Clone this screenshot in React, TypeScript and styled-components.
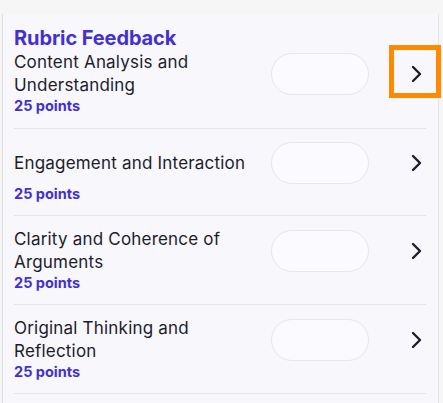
import React from "react";
import styled, { createGlobalStyle } from "styled-components";

type Criterion = {
  id: string;
  label: string;
  points: number;
};

const criteria: Criterion[] = [
  { id: "content", label: "Content Analysis and Understanding", points: 25 },
  { id: "engagement", label: "Engagement and Interaction", points: 25 },
  { id: "clarity", label: "Clarity and Coherence of Arguments", points: 25 },
  { id: "original", label: "Original Thinking and Reflection", points: 25 },
];

const GlobalStyle = createGlobalStyle`
  html, body {
    margin: 0;
    padding: 0;
    background: #f6f6f7;
    font-family: Inter, "Noto Sans", "Liberation Sans", sans-serif;
  }
  * {
    box-sizing: border-box;
  }
`;

const Page = styled.div`
  padding: 14px 4px 0 2px;
  height: 403px;
  overflow: hidden;
`;

const Panel = styled.section`
  background: #f7f7fc;
  border-left: 1px solid #dddde2;
  border-right: 1px solid #e3e3e8;
  padding: 12px 12px 0 11px;
  min-height: 400px;
`;

const Heading = styled.h2`
  margin: 0;
  font-size: 20px;
  line-height: 25px;
  font-weight: 700;
  letter-spacing: -0.1px;
  color: #4331cf;
`;

const Row = styled.div<{ first?: boolean }>`
  padding: ${({ first }) => (first ? "0 0 13px" : "12px 0 12px")};
  border-bottom: 1px solid #e4e4e9;
`;

const RowMain = styled.div`
  display: flex;
  align-items: center;
  min-height: 44px;
`;

const Label = styled.div`
  flex: 1;
  padding-right: 16px;
  font-size: 17px;
  line-height: 23px;
  letter-spacing: 0.2px;
  color: #1d1c2b;
`;

const ScoreInput = styled.input`
  width: 98px;
  height: 42px;
  border: 1px solid #e6e6ec;
  border-radius: 21px;
  background: #fafaff;
  outline: none;
  flex-shrink: 0;
`;

const ChevronButton = styled.button<{ focused?: boolean }>`
  position: relative;
  width: 42px;
  height: 44px;
  margin: 0 -10px 0 25px;
  padding: 0 0 0 2px;
  border: none;
  background: transparent;
  display: flex;
  align-items: center;
  justify-content: center;
  color: #1d1c2b;
  flex-shrink: 0;

  &::after {
    content: "";
    display: ${({ focused }) => (focused ? "block" : "none")};
    position: absolute;
    top: -7px;
    bottom: -2px;
    left: -5px;
    right: -5px;
    border: 5px solid #ff8a00;
    pointer-events: none;
  }
`;

const Points = styled.div`
  font-size: 14.5px;
  line-height: 18px;
  font-weight: 700;
  color: #4331cf;
`;

const Chevron = () => (
  <svg width="24" height="24" viewBox="0 0 24 24" fill="none">
    <path
      d="M9 5l7 7-7 7"
      stroke="currentColor"
      strokeWidth="2.4"
      strokeLinecap="round"
      strokeLinejoin="round"
    />
  </svg>
);

const App = () => {
  return (
    <Page>
      <GlobalStyle />
      <Panel>
        <Heading>Rubric Feedback</Heading>
        {criteria.map((c, i) => (
          <Row key={c.id} first={i === 0}>
            <RowMain>
              <Label>{c.label}</Label>
              <ScoreInput aria-label={`${c.label} score`} />
              <ChevronButton focused={i === 0} aria-label="Open criterion">
                <Chevron />
              </ChevronButton>
            </RowMain>
            <Points>{c.points} points</Points>
          </Row>
        ))}
      </Panel>
    </Page>
  );
};

export default App;
